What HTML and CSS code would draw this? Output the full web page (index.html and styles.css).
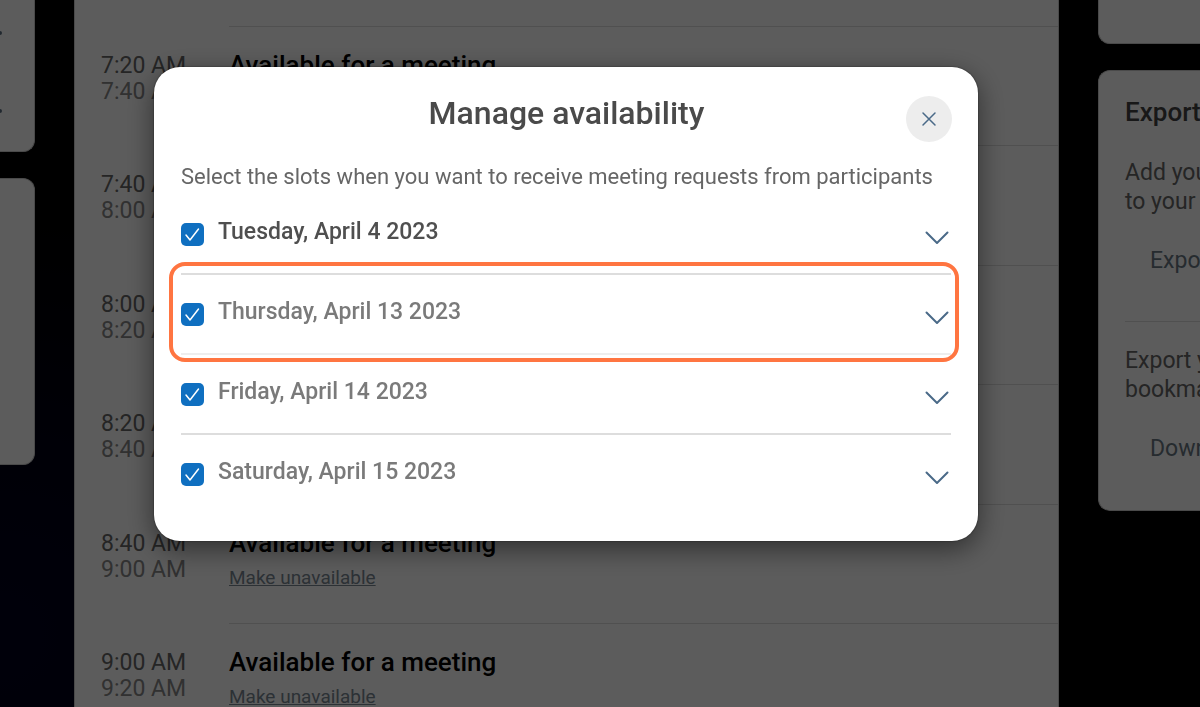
FILE: index.html
```html
<!DOCTYPE html>
<html lang="en">
<head>
<meta charset="utf-8">
<title>Manage availability</title>
<link rel="stylesheet" href="styles.css">
</head>
<body>
<div class="page">
  <aside class="side side-left">
    <section class="card card-menu"><span class="dot"></span><span class="dot"></span></section>
    <section class="card card-info"></section>
  </aside>
  <main class="schedule">
    <article class="slot">
      <div class="times"><time>7:20 AM</time><time class="end">7:40 AM</time></div>
      <div class="detail"><h3>Available for a meeting</h3></div>
    </article>
    <article class="slot">
      <div class="times"><time>7:40 AM</time><time class="end">8:00 AM</time></div>
      <div class="detail"></div>
    </article>
    <article class="slot">
      <div class="times"><time>8:00 AM</time><time class="end">8:20 AM</time></div>
      <div class="detail"></div>
    </article>
    <article class="slot">
      <div class="times"><time>8:20 AM</time><time class="end">8:40 AM</time></div>
      <div class="detail"></div>
    </article>
    <article class="slot">
      <div class="times"><time>8:40 AM</time><time class="end">9:00 AM</time></div>
      <div class="detail"><h3>Available for a meeting</h3><a href="#">Make unavailable</a></div>
    </article>
    <article class="slot">
      <div class="times"><time>9:00 AM</time><time class="end">9:20 AM</time></div>
      <div class="detail"><h3>Available for a meeting</h3><a href="#">Make unavailable</a></div>
    </article>
  </main>
  <aside class="side side-right">
    <section class="card card-top"></section>
    <section class="card card-export">
      <h2>Export</h2>
      <p>Add you<br>to your</p>
      <a href="#">Export</a>
      <hr>
      <p>Export y<br>bookmarks</p>
      <a href="#">Download</a>
    </section>
  </aside>
</div>
<div class="overlay">
  <div class="modal" role="dialog" aria-modal="true" aria-labelledby="modal-title">
    <header class="modal-head">
      <h1 id="modal-title">Manage availability</h1>
      <button class="close" type="button" aria-label="Close"><svg width="16" height="16" viewBox="0 0 16 16"><path d="M2 2l12 12M14 2L2 14"/></svg></button>
    </header>
    <p class="intro">Select the slots when you want to receive meeting requests from participants</p>
    <ul class="days">
      <li class="day open">
        <span class="check"><input type="checkbox" id="d1" checked><svg width="23" height="23" viewBox="0 0 23 23"><path d="M5 12l4 5L17.500 6"/></svg></span>
        <label for="d1">Tuesday, April 4 2023</label>
        <button class="toggle" type="button" aria-label="Expand Tuesday"><svg width="24" height="14" viewBox="0 0 24 14"><path d="M1.500 1.500L12 12 22.500 1.500"/></svg></button>
      </li>
      <li class="day marked">
        <span class="check"><input type="checkbox" id="d2" checked><svg width="23" height="23" viewBox="0 0 23 23"><path d="M5 12l4 5L17.500 6"/></svg></span>
        <label for="d2">Thursday, April 13 2023</label>
        <button class="toggle" type="button" aria-label="Expand Thursday"><svg width="24" height="14" viewBox="0 0 24 14"><path d="M1.500 1.500L12 12 22.500 1.500"/></svg></button>
      </li>
      <li class="day">
        <span class="check"><input type="checkbox" id="d3" checked><svg width="23" height="23" viewBox="0 0 23 23"><path d="M5 12l4 5L17.500 6"/></svg></span>
        <label for="d3">Friday, April 14 2023</label>
        <button class="toggle" type="button" aria-label="Expand Friday"><svg width="24" height="14" viewBox="0 0 24 14"><path d="M1.500 1.500L12 12 22.500 1.500"/></svg></button>
      </li>
      <li class="day">
        <span class="check"><input type="checkbox" id="d4" checked><svg width="23" height="23" viewBox="0 0 23 23"><path d="M5 12l4 5L17.500 6"/></svg></span>
        <label for="d4">Saturday, April 15 2023</label>
        <button class="toggle" type="button" aria-label="Expand Saturday"><svg width="24" height="14" viewBox="0 0 24 14"><path d="M1.500 1.500L12 12 22.500 1.500"/></svg></button>
      </li>
    </ul>
  </div>
</div>
</body>
</html>
```
FILE: styles.css
```css
* { box-sizing: border-box; }
body {
  margin: 0;
  height: 100vh;
  overflow: hidden;
  font-family: Roboto, "Liberation Sans", sans-serif;
  font-size: 23px;
  color: #666;
  background: #000;
}
h1, h2, h3, p, ul { margin: 0; padding: 0; }
button { border: 0; padding: 0; background: none; cursor: pointer; }
svg { display: block; fill: none; stroke-linecap: round; stroke-linejoin: round; }

.page {
  display: flex;
  gap: 39px;
  height: 100vh;
  overflow: hidden;
  background: radial-gradient(circle at 0 90%, #00001e 0, #000014 15%, #000 32%);
}
.side { display: flex; flex-direction: column; gap: 26px; flex: none; }
.side-left { width: 35px; }
.side-right { width: 102px; overflow: hidden; }
.card { background: #fff; border: 1px solid #ccc; }
.side-left .card { border-left: 0; border-radius: 0 12px 12px 0; }
.side-right .card { border-right: 0; border-radius: 12px 0 0 12px; }
.side .card:first-child { border-top: 0; }
.side-left .card:first-child, .side-right .card:first-child { border-top-left-radius: 0; border-top-right-radius: 0; }

.card-menu { padding: 31px 0 38px; display: flex; flex-direction: column; gap: 74px; }
.dot { width: 2px; height: 4px; border-radius: 0 2px 2px 0; background: #5b7083; }
.card-info { height: 287px; }
.card-top { height: 44px; }
.card-export { padding: 26px 0 46px 26px; white-space: nowrap; }
.card-export h2 { font-size: 26px; line-height: 30px; font-weight: 500; color: #444; }
.card-export p { margin-top: 31px; line-height: 29px; }
.card-export a { display: block; margin: 30px 0 0 25px; line-height: 30px; color: #6a7884; text-decoration: none; }
.card-export hr { margin: 45px 0 0; border: 0; border-top: 1px solid #dedede; }
.card-export hr + p { margin-top: 24px; }

.schedule { flex: 1; padding-top: 26px; background: #fff; border: solid #ccc; border-width: 0 1px; }
.slot { display: flex; height: 119px; padding-left: 26px; }
.slot:nth-child(even) { height: 120px; }
.times { flex: none; width: 128px; padding-top: 27px; display: flex; flex-direction: column; line-height: 26px; }
.end { color: #888; }
.detail { flex: 1; border-top: 1px solid #dedede; padding-top: 22px; }
.detail h3 { font-size: 26px; line-height: 32px; font-weight: 500; color: #000; }
.detail a { display: inline-block; margin-top: 7px; font-size: 19px; line-height: 24px; color: #7a8894; }

.overlay {
  position: fixed;
  inset: 0;
  padding: 67px 68px 0 0;
  background: rgba(0, 0, 0, .64);
}
.modal {
  width: 100%;
  max-width: 824px;
  margin: 0 auto;
  padding: 29px 26px 26px 27px;
  border-radius: 26px;
  background: #fff;
  box-shadow: 0 8px 28px rgba(0, 0, 0, .5), 0 0 2px rgba(0, 0, 0, .6);
}
.modal-head { display: grid; grid-template-columns: 46px 1fr 46px; align-items: start; }
.modal-head h1 { grid-column: 2; text-align: center; font-size: 32px; line-height: 34px; font-weight: 500; color: #4a4a4a; }
.close { width: 46px; height: 46px; border-radius: 50%; background: #ededed; display: grid; place-items: center; }
.close svg, .toggle svg { stroke: #4a6a88; stroke-width: 2; }
.close svg { stroke-width: 1.5; }
.intro { margin-top: 19px; font-size: 22px; line-height: 32px; color: #666; white-space: nowrap; }
.days { list-style: none; margin: 2px 1px 0 0; }
.day {
  position: relative;
  display: flex;
  align-items: flex-start;
  height: 80px;
  padding-top: 28px;
  border-bottom: 2px solid #ddd;
  color: #7a7a7a;
}
.day:last-child { border-bottom: 0; }
.day.open { color: #4f4f4f; }
.day.marked { border-bottom-color: #eee; }
.day.marked::after {
  content: "";
  position: absolute;
  inset: -13px -8px -9px -12px;
  border: 4px solid #ff7541;
  border-radius: 16px;
  pointer-events: none;
}
.check { display: grid; }
.check > * { grid-area: 1 / 1; }
.check input { appearance: none; width: 23px; height: 23px; margin: 0; border-radius: 5px; background: #0f6fc0; }
.check svg { stroke: #fff; stroke-width: 1.500; pointer-events: none; }
.day label { flex: 1; margin-left: 14px; line-height: 18px; font-weight: 500; }
.toggle { padding-top: 8px; margin-right: 2px; }
```
